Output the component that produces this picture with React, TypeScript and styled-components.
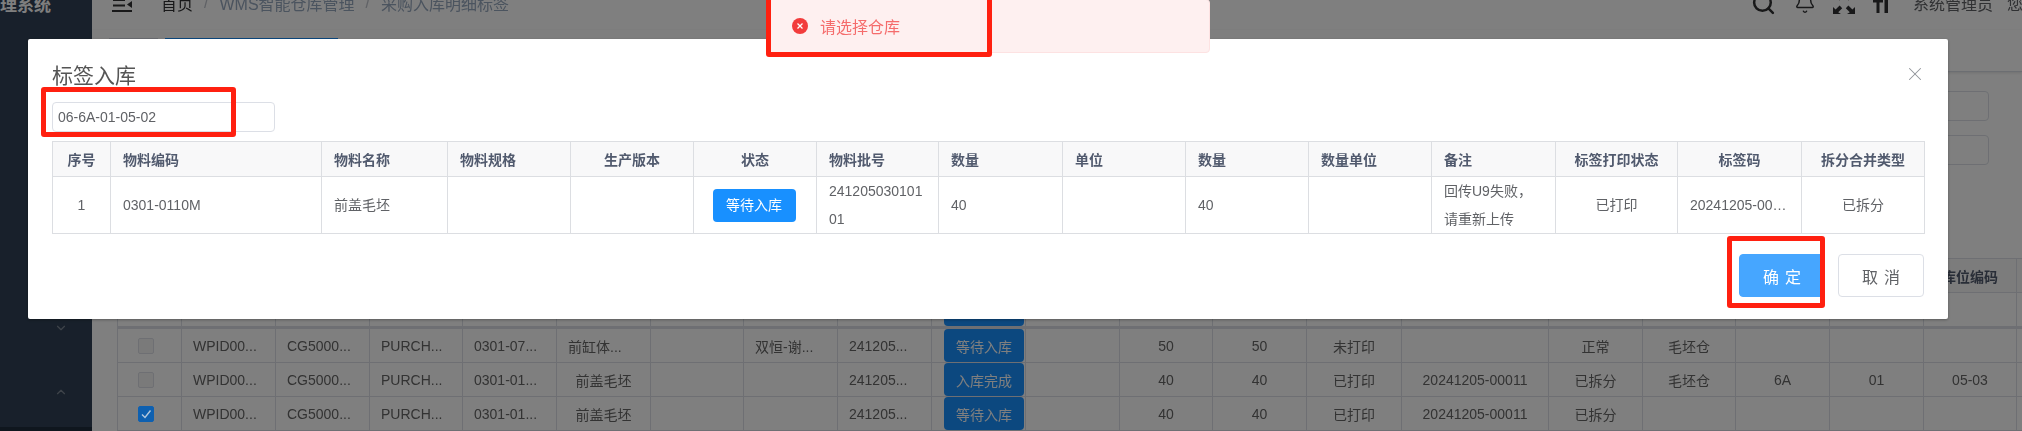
import React from 'react'
import styled, {createGlobalStyle} from 'styled-components'
import {Bell, ChevronDown, ChevronUp, Search, X} from 'lucide-react'

const FONT = `"Liberation Sans", "Noto Sans CJK SC", sans-serif`

const dialogCols = [58, 211, 126, 123, 123, 123, 122, 124, 123, 123, 123, 124, 122, 124, 123]
const pageCols = [64, 94, 94, 93, 94, 94, 93, 94, 94, 94, 94, 93, 94, 95, 147, 94, 93, 94, 94, 93, 94]

const dialogHeaders: [string, boolean][] = [
  ['序号', true],
  ['物料编码', false],
  ['物料名称', false],
  ['物料规格', false],
  ['生产版本', true],
  ['状态', true],
  ['物料批号', false],
  ['数量', false],
  ['单位', false],
  ['数量', false],
  ['数量单位', false],
  ['备注', false],
  ['标签打印状态', true],
  ['标签码', true],
  ['拆分合并类型', true],
]

const pageRows = [
  {
    checked: false,
    code: '0301-07...',
    name: '前缸体...',
    nameLeft: true,
    vendor: '双恒-谢...',
    status: '等待入库',
    qty: '50',
    print: '未打印',
    label: '',
    split: '正常',
    store: '毛坯仓',
    area: '',
    shelf: '',
    bin: '',
  },
  {
    checked: false,
    code: '0301-01...',
    name: '前盖毛坯',
    nameLeft: false,
    vendor: '',
    status: '入库完成',
    qty: '40',
    print: '已打印',
    label: '20241205-00011',
    split: '已拆分',
    store: '毛坯仓',
    area: '6A',
    shelf: '01',
    bin: '05-03',
  },
  {
    checked: true,
    code: '0301-01...',
    name: '前盖毛坯',
    nameLeft: false,
    vendor: '',
    status: '等待入库',
    qty: '40',
    print: '已打印',
    label: '20241205-00011',
    split: '已拆分',
    store: '',
    area: '',
    shelf: '',
    bin: '',
  },
]

export default function App(): JSX.Element {
  return (
    <>
      <GlobalStyle />
      <Page>
        <Sidebar>
          <Logo>仓储管理系统</Logo>
          <Menu>
            <MenuItem>
              <ChevronDown size={14} />
            </MenuItem>
            <MenuItem>
              <ChevronUp size={14} />
            </MenuItem>
          </Menu>
          <SidebarFoot />
        </Sidebar>

        <Main>
          <Navbar>
            <HamburgerIcon />
            <Breadcrumb>
              <strong>首页</strong>
              <Slash>/</Slash>
              <span>WMS智能仓库管理</span>
              <Slash>/</Slash>
              <span>采购入库明细标签</span>
            </Breadcrumb>
            <NavRight>
              <NavIcon $gap={18}>
                <Search size={25} strokeWidth={2.4} />
              </NavIcon>
              <NavIcon $gap={17}>
                <Bell size={22} strokeWidth={1.6} />
              </NavIcon>
              <NavIcon $gap={18}>
                <FullscreenIcon />
              </NavIcon>
              <NavIcon $gap={24}>
                <FontSizeIcon />
              </NavIcon>
              <UserName>系统管理员</UserName>
              <Greeting>您好</Greeting>
            </NavRight>
          </Navbar>

          <TagsBar>
            <Tag />
            <Tag $active />
          </TagsBar>

          <Filters>
            <FilterInput />
            <FilterInput />
          </Filters>

          <PageTableWrap>
            <PageTable>
              <colgroup>
                {pageCols.map((w, i) => (
                  <col key={i} width={w} />
                ))}
              </colgroup>
              <thead>
                <tr>
                  {pageCols.map((_, i) => (
                    <PageTh key={i}>{i === 19 ? '库位编码' : ''}</PageTh>
                  ))}
                </tr>
              </thead>
              <tbody>
                <FirstRow>
                  {pageCols.map((_, i) => (
                    <PageTd key={i}>{i === 9 && <StatusTag>等待入库</StatusTag>}</PageTd>
                  ))}
                </FirstRow>
                {pageRows.map((row, i) => (
                  <tr key={i}>
                    <PageTd>
                      <Checkbox $checked={row.checked}>
                        {row.checked && (
                          <svg width="12" height="12" viewBox="0 0 12 12">
                            <path d="M2 6.5 L5 9.5 L10.5 2.5" fill="none" stroke="#b4c8dc" strokeWidth="1.4" />
                          </svg>
                        )}
                      </Checkbox>
                    </PageTd>
                    <PageTd $left>WPID00...</PageTd>
                    <PageTd $left>CG5000...</PageTd>
                    <PageTd $left>PURCH...</PageTd>
                    <PageTd $left>{row.code}</PageTd>
                    <PageTd $left={row.nameLeft}>{row.name}</PageTd>
                    <PageTd />
                    <PageTd $left>{row.vendor}</PageTd>
                    <PageTd $left>241205...</PageTd>
                    <PageTd>
                      <StatusTag>{row.status}</StatusTag>
                    </PageTd>
                    <PageTd />
                    <PageTd>{row.qty}</PageTd>
                    <PageTd>{row.qty}</PageTd>
                    <PageTd>{row.print}</PageTd>
                    <PageTd>{row.label}</PageTd>
                    <PageTd>{row.split}</PageTd>
                    <PageTd>{row.store}</PageTd>
                    <PageTd>{row.area}</PageTd>
                    <PageTd>{row.shelf}</PageTd>
                    <PageTd>{row.bin}</PageTd>
                    <PageTd />
                  </tr>
                ))}
              </tbody>
            </PageTable>
          </PageTableWrap>
        </Main>
      </Page>

      <Overlay>
        <Dialog>
          <DialogTitle>标签入库</DialogTitle>
          <CloseButton>
            <X size={22} strokeWidth={1.1} />
          </CloseButton>
          <LocationInput value="06-6A-01-05-02" readOnly />

          <LabelTable>
            <colgroup>
              {dialogCols.map((w, i) => (
                <col key={i} width={w} />
              ))}
            </colgroup>
            <thead>
              <tr>
                {dialogHeaders.map(([title, center], i) => (
                  <LabelTh key={i} $center={center}>
                    {title}
                  </LabelTh>
                ))}
              </tr>
            </thead>
            <tbody>
              <tr>
                <LabelTd $center>1</LabelTd>
                <LabelTd>0301-0110M</LabelTd>
                <LabelTd>前盖毛坯</LabelTd>
                <LabelTd />
                <LabelTd />
                <LabelTd $center>
                  <WaitButton>等待入库</WaitButton>
                </LabelTd>
                <LabelTd>24120503010101</LabelTd>
                <LabelTd>40</LabelTd>
                <LabelTd />
                <LabelTd>40</LabelTd>
                <LabelTd />
                <LabelTd>回传U9失败，请重新上传</LabelTd>
                <LabelTd $center>已打印</LabelTd>
                <LabelTd $center>
                  <Ellipsis>20241205-00011</Ellipsis>
                </LabelTd>
                <LabelTd $center>已拆分</LabelTd>
              </tr>
            </tbody>
          </LabelTable>

          <DialogFooter>
            <FooterButton $primary>确定</FooterButton>
            <FooterButton>取消</FooterButton>
          </DialogFooter>
        </Dialog>

        <Toast>
          <ToastIcon>
            <svg width="8" height="8" viewBox="0 0 8 8">
              <path d="M1.5 1.5 L6.5 6.5 M6.5 1.5 L1.5 6.5" stroke="#fff" strokeWidth="1.3" />
            </svg>
          </ToastIcon>
          请选择仓库
        </Toast>

        <ToastMark />
        <InputMark />
        <ConfirmMark />
      </Overlay>
    </>
  )
}

function HamburgerIcon() {
  return (
    <NavSvg width="20" height="22" viewBox="0 0 20 22">
      <path d="M1 8h12M1 13.5h12M0 19h20" stroke="#303133" strokeWidth="2" />
      <path d="M20 9v7l-5-3.5z" fill="#303133" />
    </NavSvg>
  )
}

function FullscreenIcon() {
  return (
    <svg width="22" height="22" viewBox="0 0 22 22" fill="#303133">
      <path d="M0 22v-7l2.6 2.6 4-4 2.6 2.6-4 4L8 22zM22 22v-7l-2.6 2.6-4-4-2.6 2.6 4 4L14 22z" />
      <path d="M0 0v7l2.6-2.6 4 4 2.6-2.6-4-4L8 0zM22 0v7l-2.6-2.6-4 4-2.6-2.6 4-4L14 0z" />
    </svg>
  )
}

function FontSizeIcon() {
  return (
    <svg width="16" height="22" viewBox="0 0 16 22" fill="#303133">
      <path d="M0 8h10v2.4H6.5V21h-3V10.4H0zM11.5 6h3.5v15h-3.5z" />
    </svg>
  )
}

const GlobalStyle = createGlobalStyle`
  html, body {
    margin: 0;
    height: 100%;
    overflow: hidden;
    background: #fff;
    font-family: ${FONT};
  }

  #root {
    display: flow-root;
    height: 431px;
    filter: blur(0.45px);
  }
`

const Page = styled.div`
  display: flex;
  height: 455px;
  margin-top: -24px;
  overflow: hidden;
`

const Sidebar = styled.aside`
  flex: none;
  width: 92px;
  display: flex;
  flex-direction: column;
  background: #304156;
`

const Logo = styled.div`
  height: 54px;
  display: flex;
  align-items: center;
  justify-content: flex-end;
  padding-right: 41px;
  font-size: 17px;
  font-weight: bold;
  color: #fff;
  white-space: nowrap;
  overflow: hidden;
`

const Menu = styled.div`
  flex: 1;
  padding-top: 266px;
`

const MenuItem = styled.div`
  height: 64px;
  display: flex;
  align-items: center;
  justify-content: flex-end;
  padding-right: 24px;
  color: #7d8794;
`

const SidebarFoot = styled.div`
  height: 4px;
  background: #1f2d3d;
`

const Main = styled.main`
  flex: 1;
  min-width: 0;
`

const Navbar = styled.header`
  height: 54px;
  display: flex;
  align-items: center;
  padding-left: 20px;
`

const NavSvg = styled.svg`
  flex: none;
`

const Breadcrumb = styled.nav`
  display: flex;
  align-items: center;
  margin-left: 29px;
  font-size: 16px;
  color: #97a8be;

  strong {
    font-weight: normal;
    color: #303133;
  }
`

const Slash = styled.span`
  margin: 0 11px;
  color: #c0c4cc;
`

const NavRight = styled.div`
  flex: none;
  margin-left: auto;
  width: 271px;
  display: flex;
  align-items: center;
  overflow: hidden;
  color: #303133;
`

const NavIcon = styled.span<{$gap: number}>`
  flex: none;
  display: flex;
  margin-right: ${({$gap}) => $gap}px;
`

const UserName = styled.span`
  flex: none;
  font-size: 16px;
  white-space: nowrap;
  color: #606266;
`

const Greeting = styled(UserName)`
  margin-left: 14px;
`

const TagsBar = styled.div`
  height: 42px;
  box-sizing: border-box;
  display: flex;
  gap: 7px;
  padding: 8px 0 0 17px;
  border-bottom: 1px solid #d8dce5;
  box-shadow: 0 1px 3px rgba(0, 0, 0, 0.12);
`

const Tag = styled.div<{$active?: boolean}>`
  width: ${({$active}) => ($active ? 173 : 49)}px;
  height: 34px;
  box-sizing: border-box;
  border-top: 1px solid ${({$active}) => ($active ? '#1890ff' : '#d8dce5')};
`

const Filters = styled.div`
  display: flex;
  flex-direction: column;
  align-items: flex-end;
  gap: 14px;
  padding: 19px 33px 0 0;
`

const FilterInput = styled.div`
  width: 200px;
  height: 30px;
  box-sizing: border-box;
  border: 1px solid #dcdfe6;
  border-radius: 4px;
`

const PageTableWrap = styled.div`
  margin: 93px 0 0 25px;
  overflow: hidden;
`

const PageTable = styled.table`
  table-layout: fixed;
  width: 1993px;
  border-collapse: collapse;
  font-size: 14px;
  color: #666;
`

const PageTh = styled.th`
  height: 33px;
  padding: 0;
  border: 1px solid #dcdfe6;
  background: #f8f8f9;
  font-size: 14px;
  font-weight: bold;
  color: #515a6e;
  white-space: nowrap;
`

const FirstRow = styled.tr`
  border-bottom: 3px solid #dcdfe6;
`

const PageTd = styled.td<{$left?: boolean}>`
  height: 33px;
  padding: 0 0 0 ${({$left}) => ($left ? 11 : 0)}px;
  border: 1px solid #dcdfe6;
  text-align: ${({$left}) => ($left ? 'left' : 'center')};
  white-space: nowrap;
`

const StatusTag = styled.div`
  box-sizing: border-box;
  width: 80px;
  height: 33px;
  margin-left: 12px;
  display: flex;
  align-items: center;
  justify-content: center;
  border-radius: 4px;
  background: #1890ff;
  color: #fff;
`

const Checkbox = styled.span<{$checked: boolean}>`
  position: relative;
  z-index: ${({$checked}) => ($checked ? 3 : 'auto')};
  display: inline-flex;
  align-items: center;
  justify-content: center;
  box-sizing: border-box;
  width: 16px;
  height: 16px;
  margin-right: 8px;
  vertical-align: middle;
  border-radius: 2px;
  border: 1px solid ${({$checked}) => ($checked ? '#0e60b0' : '#dcdfe6')};
  background: ${({$checked}) => ($checked ? '#0e60b0' : '#f4f4f5')};
`

const Overlay = styled.div`
  position: fixed;
  inset: 0;
  z-index: 2;
  background: rgba(0, 0, 0, 0.5);
`

const Dialog = styled.section`
  position: relative;
  width: 1920px;
  height: 280px;
  margin: 39px 0 0 28px;
  box-sizing: border-box;
  padding: 24px 24px 0;
  border-radius: 2px;
  background: #fff;
  box-shadow: 0 1px 3px rgba(0, 0, 0, 0.3);
`

const DialogTitle = styled.h2`
  margin: 0;
  height: 26px;
  line-height: 26px;
  font-size: 21px;
  font-weight: normal;
  color: #555;
`

const CloseButton = styled.span`
  position: absolute;
  top: 24px;
  right: 22px;
  display: flex;
  color: #909399;
`

const LocationInput = styled.input`
  display: block;
  box-sizing: border-box;
  width: 223px;
  height: 30px;
  margin: 13px 0 9px;
  padding: 0 5px;
  border: 1px solid #dcdfe6;
  border-radius: 4px;
  outline: none;
  font-family: ${FONT};
  font-size: 14px;
  color: #606266;
`

const LabelTable = styled.table`
  table-layout: fixed;
  width: 1872px;
  border-collapse: collapse;
  font-size: 14px;
  color: #606266;
`

const LabelTh = styled.th<{$center?: boolean}>`
  height: 34px;
  padding: 0 12px;
  border: 1px solid #dcdee2;
  background: #f8f8f9;
  font-size: 14px;
  font-weight: bold;
  color: #515a6e;
  white-space: nowrap;
  text-align: ${({$center}) => ($center ? 'center' : 'left')};
`

const LabelTd = styled.td<{$center?: boolean}>`
  height: 55px;
  padding: 0 12px;
  border: 1px solid #dcdee2;
  line-height: 28px;
  word-break: break-all;
  text-align: ${({$center}) => ($center ? 'center' : 'left')};
`

const WaitButton = styled.span`
  display: inline-flex;
  align-items: center;
  justify-content: center;
  width: 83px;
  height: 33px;
  margin: 0 -11px 0 -13px;
  border-radius: 4px;
  background: #1890ff;
  color: #fff;
`

const Ellipsis = styled.div`
  overflow: hidden;
  white-space: nowrap;
  text-overflow: ellipsis;
`

const DialogFooter = styled.footer`
  display: flex;
  justify-content: flex-end;
  gap: 13px;
  margin-top: 20px;
`

const FooterButton = styled.button<{$primary?: boolean}>`
  width: 86px;
  height: 43px;
  padding: 0;
  border: 1px solid ${({$primary}) => ($primary ? '#46a6ff' : '#dcdfe6')};
  border-radius: 4px;
  background: ${({$primary}) => ($primary ? '#46a6ff' : '#fff')};
  color: ${({$primary}) => ($primary ? '#fff' : '#606266')};
  font-family: ${FONT};
  font-size: 16px;
  letter-spacing: 6px;
  text-indent: 6px;
`

const Toast = styled.div`
  position: absolute;
  top: -1px;
  left: 766px;
  width: 444px;
  height: 54px;
  box-sizing: border-box;
  display: flex;
  align-items: center;
  gap: 12px;
  padding-left: 25px;
  border: 1px solid #fde2e2;
  border-radius: 4px;
  background: #fef0f0;
  font-size: 16px;
  color: #f56c6c;
`

const ToastIcon = styled.span`
  width: 16px;
  height: 16px;
  display: flex;
  align-items: center;
  justify-content: center;
  border-radius: 50%;
  background: #f23c3c;
`

const RedMark = styled.div`
  position: absolute;
  box-sizing: border-box;
  border: 5px solid #ff2010;
  border-radius: 3px;
`

const ToastMark = styled(RedMark)`
  top: -10px;
  left: 766px;
  width: 226px;
  height: 67px;
`

const InputMark = styled(RedMark)`
  top: 87px;
  left: 41px;
  width: 195px;
  height: 50px;
`

const ConfirmMark = styled(RedMark)`
  top: 236px;
  left: 1727px;
  width: 98px;
  height: 72px;
`
